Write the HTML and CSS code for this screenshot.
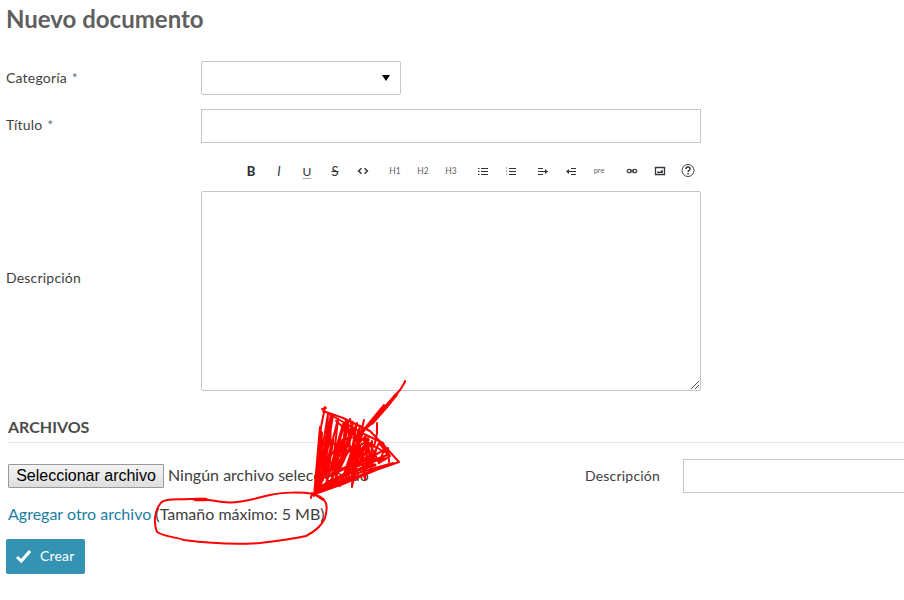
FILE: index.html
```html
<!DOCTYPE html>
<html lang="es">
<head>
<meta charset="utf-8">
<title>Nuevo documento</title>
<link rel="stylesheet" href="styles.css">
</head>
<body>
<main class="page">
  <h1 class="title">Nuevo documento</h1>
  <div class="row row-category">
    <span class="label">Categoría <span class="req">*</span></span>
    <div class="select"><span class="caret"></span></div>
  </div>
  <div class="row row-name">
    <span class="label">Título <span class="req">*</span></span>
    <div class="input"></div>
  </div>
  <div class="toolbar">
    <div class="group">
      <span class="tool bold">B</span>
      <span class="tool italic">I</span>
      <span class="tool underline">U</span>
      <span class="tool strike">S</span>
      <span class="tool"><svg width="12" height="8" viewBox="0 0 12 8"><path d="M4.5 1.3 1.6 4l2.9 2.7M7.5 1.3 10.4 4 7.5 6.7" fill="none" stroke="#333" stroke-width="1.5"/></svg></span>
    </div>
    <div class="group">
      <span class="tool head">H1</span>
      <span class="tool head">H2</span>
      <span class="tool head">H3</span>
    </div>
    <div class="group">
      <span class="tool"><svg width="12" height="9" viewBox="0 0 12 9"><path d="M4 1.5h7M4 4.5h7M4 7.5h7M1 1.5h1.5M1 4.5h1.5M1 7.5h1.5" stroke="#333"/></svg></span>
      <span class="tool"><svg width="12" height="9" viewBox="0 0 12 9"><path d="M4 1.5h7M4 4.5h7M4 7.5h7" stroke="#333"/><path d="M1.5 0v9" stroke="#b9b3bd" stroke-dasharray="2 1"/></svg></span>
    </div>
    <div class="group">
      <span class="tool"><svg width="12" height="9" viewBox="0 0 12 9"><path d="M1 1.5h5M1 4.5h9M1 7.5h5" stroke="#333"/><path d="M8 2v5l3-2.5z" fill="#333"/></svg></span>
      <span class="tool"><svg width="12" height="9" viewBox="0 0 12 9"><path d="M6 1.5h5M2 4.5h9M6 7.5h5" stroke="#333"/><path d="M4 2v5L1 4.5z" fill="#333"/></svg></span>
      <span class="tool pre">pre</span>
    </div>
    <div class="group shifted">
      <span class="tool"><svg width="12" height="8" viewBox="0 0 12 8"><g fill="none" stroke="#444" stroke-width="1.3"><rect x="1.3" y="2.3" width="4" height="3.4" rx="1.7"/><rect x="6.7" y="2.3" width="4" height="3.4" rx="1.7"/><path d="M4 4h4"/></g></svg></span>
      <span class="tool"><svg width="12" height="10" viewBox="0 0 12 10"><path d="M1.5 1.500h9v7h-9z" fill="#fff" stroke="#3b3540" stroke-width="1.300"/><path d="M3.200 7V5.800L4.500 5.200 5.500 6l3.300-2.600V7z" fill="#3b3540"/></svg></span>
      <span class="tool"><svg width="14" height="14" viewBox="0 0 14 14"><circle cx="7" cy="6.500" r="6" fill="none" stroke="#3c4248"/><path d="M5 4.900C5 2.500 9.100 2.500 9.100 4.800 9.100 6.300 7.100 6.200 7.100 8M7.100 9.100v1.500" fill="none" stroke="#333" stroke-width="1.5"/></svg></span>
    </div>
  </div>
  <div class="row row-text">
    <span class="label">Descripción</span>
    <div class="textarea"><svg class="grip" width="10" height="10" viewBox="0 0 10 10"><path d="M1 9 9 1M5 9l4-4" stroke="#555"/></svg></div>
  </div>
  <h2 class="section">ARCHIVOS</h2>
  <div class="file-row">
    <span class="file-button">Seleccionar archivo</span>
    <span class="file-name">Ningún archivo seleccionado</span>
    <span class="file-label">Descripción</span>
    <div class="file-input"></div>
  </div>
  <p class="more"><a class="link">Agregar otro archivo</a> <span class="limit">(Tamaño máximo: 5 MB)</span></p>
  <div class="create"><svg class="check" width="15" height="14" viewBox="0 0 15 14"><path d="m1 7 4.300 4L14 1" fill="none" stroke="#fff" stroke-width="3"/></svg><span class="create-text">Crear</span></div>
  <svg class="drawing" width="904" height="600" viewBox="0 0 904 600">
    <path d="M314 494C302 492 282 492 270 495C253 499 241 503 229 502.500C216 502 207 498 190 499C176 500 164 498 160 504C155 511 153 522 157 532C165 537 176 537 184 540C207 543 233 545 260 543C278 541 293 539 306 536C314 532 321 527 325 518C328 507 328 499 316 495"/>
    <path d="M195 499.500h11" stroke-width="3.500"/>
    <path d="M405 381C402 390 393 398 387 406L371 424 359 435 374 419 390 401 400 390 405 382M361 433 384 405M366 429 394 397"/>
    <path d="M396 395 387 406 372 423" stroke-width="3.500"/>
    <path d="M325 407 321 427 319 454 314 496 320 427 323 450 315 494 328 414 326 450 319 485 331 414 330 462 317 493 333 415 323 478 338 419 332 474 343 424 325 487 346 420 340 468 348 421 350 447 336 477 353 422 350 441 327 489 357 423 350 460 340 486 360 426 357 447 345 481 364 430 353 457 352 487 360 446 365 480 368 438 359 464 372 441 371 469 376 450"/>
    <path d="M323 411 343 418 370 431 389 451 399 462 376 470 343 484 312 495 353 468 387 455 341 478 316 492 393 463 361 472 324 488 362 462 384 450 379 463 390 456 379 443 368 466 364 438 344 455 334 483"/>
    <path d="M329 414 364 434 383 443 388 454 369 443 350 433 336 421M377 423 377 433 374 447M322 409 326 408M364 420 361 432 352 475M350 419 355 439 369 440M319 441 352 447M321 469 342 440 358 436M317 487 339 456 366 442M317 480 361 441M326 478 375 453M370 444 379 463M388 448 389 462M312 493 311 498M314 494 323 500"/>
    <path d="M358 440 354 479M354 446 348 474M364 447 355 463M321 433 317 483M325 460 319 488" stroke-width="4"/>
    <path d="M346 450 338 467M333 440 328 468M341 443 335 470M320 487 345 474 375 465M340 470 362 461 385 459M329 423 322 466M365 437 370 455M347 430 341 452" stroke-width="3"/>
  </svg>
</main>
</body>
</html>
```
FILE: styles.css
```css
* { box-sizing: border-box; }
body { margin: 0; background: #fff; color: #404040; font-family: Lato, sans-serif; font-size: 14px; }
svg { display: block; }
.page { position: relative; width: 904px; height: 600px; overflow: hidden; }
.title { margin: 0; padding: 4px 0 0 6px; height: 61px; font-size: 24px; line-height: 30px; font-weight: 700; color: #5f5f5f; }
.row { display: flex; align-items: center; padding-left: 6px; }
.label { width: 195px; line-height: 20px; letter-spacing: 0.2px; }
.req { margin-left: 1px; color: #55788c; }
.row-category { height: 34px; margin-bottom: 14px; }
.row-name { height: 34px; }
.row-name .label { padding-bottom: 2px; }
.select { display: flex; align-items: center; justify-content: flex-end; width: 200px; height: 34px; padding-right: 10px; border: 1px solid #c6c6c6; border-radius: 2px; }
.caret { border: 4px solid transparent; border-top: 6px solid #000; border-bottom: 0; }
.input { width: 500px; height: 34px; border: 1px solid #c6c6c6; }
.toolbar { display: flex; gap: 4px; height: 48px; padding: 14px 0 6px 237px; }
.group { display: flex; }
.shifted { margin-left: 1px; }
.tool { display: flex; align-items: center; justify-content: center; width: 28px; height: 28px; font-size: 12px; color: #333; }
.bold { font-weight: 900; font-size: 13px; }
.italic { font-style: italic; font-size: 13px; }
.underline { text-decoration: underline; text-decoration-color: #aaa; text-underline-offset: 2px; }
.strike { text-decoration: line-through; font-size: 13px; }
.head { font-size: 8.5px; color: #6c5d5a; }
.pre { font-size: 7.5px; color: #666; padding-bottom: 2px; }
.row-text { height: 200px; align-items: flex-start; }
.row-text .label { padding-top: 77px; }
.textarea { display: flex; align-items: flex-end; justify-content: flex-end; width: 500px; height: 200px; border: 1px solid #c6c6c6; border-radius: 2px; }
.section { margin: 26px 0 16px 8px; height: 26px; border-bottom: 1px solid #e5e5e5; font-size: 16px; line-height: 20px; font-weight: 700; color: #4b4b4b; }
.file-row { display: flex; align-items: center; height: 34px; padding-left: 8px; font-size: 16px; white-space: nowrap; }
.file-row > * { flex-shrink: 0; }
.file-button { width: 156px; height: 24px; border: 1px solid #999; border-radius: 1px; background: linear-gradient(#f4f4f4, #dedede); color: #000; font: 16px/22px "Liberation Sans", sans-serif; text-align: center; }
.file-name { width: 421px; padding: 0 0 3px 4px; }
.file-label { width: 98px; font-size: 14px; padding-bottom: 2px; letter-spacing: 0.2px; }
.file-input { width: 230px; height: 34px; border: 1px solid #c6c6c6; }
.more { margin: 9px 0 0 8px; height: 37px; font-size: 16px; line-height: 24px; }
.link { color: #1c7da3; }
.create { display: flex; align-items: center; width: 79px; height: 35px; padding-left: 10px; gap: 9px; border-radius: 2px; background: #3493b3; color: #fff; margin-left: 6px; }
.create-text { padding-bottom: 2px; letter-spacing: 0.2px; }
.drawing { position: absolute; left: 0; top: 0; fill: none; stroke: #f00; stroke-width: 2; stroke-linecap: round; stroke-linejoin: round; }
```
